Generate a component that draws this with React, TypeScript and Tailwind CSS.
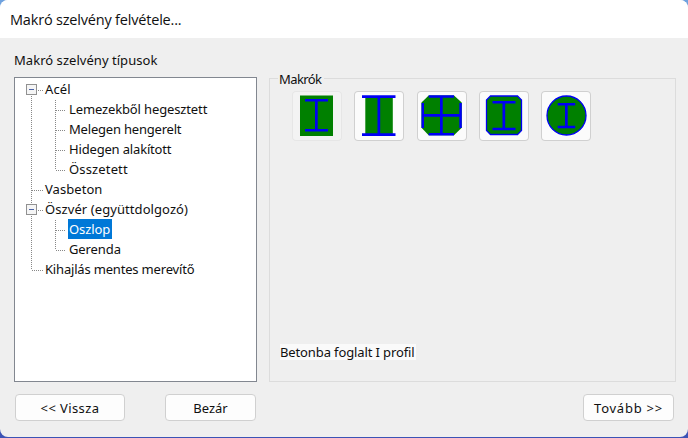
import type { ReactNode } from "react";

type Trunk = "top" | "mid" | "end";
type Item = { label: string; level: 0 | 1; trunk: Trunk; branch?: "mid" | "end"; box?: boolean; selected?: boolean; tracking: string };

const items: Item[] = [
  { label: "Acél", level: 0, trunk: "top", box: true, tracking: "tracking-[0.1px]" },
  { label: "Lemezekből hegesztett", level: 1, trunk: "mid", branch: "mid", tracking: "tracking-[-0.13px]" },
  { label: "Melegen hengerelt", level: 1, trunk: "mid", branch: "mid", tracking: "tracking-[-0.2px]" },
  { label: "Hidegen alakított", level: 1, trunk: "mid", branch: "mid", tracking: "tracking-[-0.17px]" },
  { label: "Összetett", level: 1, trunk: "mid", branch: "end", tracking: "tracking-[0.15px]" },
  { label: "Vasbeton", level: 0, trunk: "mid", tracking: "tracking-[0.05px]" },
  { label: "Öszvér (együttdolgozó)", level: 0, trunk: "mid", box: true, tracking: "tracking-[0.08px]" },
  { label: "Oszlop", level: 1, trunk: "mid", branch: "mid", selected: true, tracking: "tracking-[-0.1px]" },
  { label: "Gerenda", level: 1, trunk: "mid", branch: "end", tracking: "tracking-[-0.1px]" },
  { label: "Kihajlás mentes merevítő", level: 0, trunk: "end", tracking: "tracking-[-0.18px]" },
];

function TreeRow({ item }: { item: Item }) {
  const y1 = item.trunk === "top" ? 10 : 0;
  const y2 = item.trunk === "end" ? 10 : 20;
  return (
    <div className="flex h-5 items-start">
      <svg className="h-5 w-6 shrink-0" viewBox="0 0 24 20" shapeRendering="crispEdges" fill="none">
        <path d={`M11.5 ${y1}V${y2}`} stroke="#888" strokeDasharray="1 1" />
        {item.level === 0 && <path d="M12 10.5H23" stroke="#888" strokeDasharray="1 1" />}
        {item.box && (
          <>
            <rect x="6.5" y="4.5" width="10" height="10" fill="#f5f5f5" stroke="#919191" />
            <path d="M9 9.5H14" stroke="#4b63a7" />
          </>
        )}
      </svg>
      {item.level === 1 && (
        <svg className="h-5 w-6 shrink-0" viewBox="0 0 24 20" shapeRendering="crispEdges" fill="none">
          <path d={item.branch === "end" ? "M11.5 0V10" : "M11.5 0V20"} stroke="#888" strokeDasharray="1 1" />
          <path d="M12 10.5H22" stroke="#888" strokeDasharray="1 1" />
        </svg>
      )}
      <span className={`-mt-px flex h-5 items-center whitespace-nowrap pl-[1px] pr-[2px] ${item.tracking} ${item.selected ? "bg-[#0078d7] text-white" : ""}`}>
        {item.label}
      </span>
    </div>
  );
}

function MacroButton({ x, disabled, children }: { x: number; disabled?: boolean; children: ReactNode }) {
  return (
    <button className={`h-[50px] w-[50px] shrink-0 rounded-[4px] shadow-[inset_0_0_0_1px] ${disabled ? "bg-[#f3f3f3] shadow-[#e6e6e6]" : "bg-[#fbfbfb] shadow-[#d0d0d0]"}`}>
      <svg className="block h-[50px] w-[50px]" viewBox={`${x} 91 50 50`} fill="#0000f5">{children}</svg>
    </button>
  );
}

function PushButton({ className, children }: { className: string; children: ReactNode }) {
  return (
    <button className={`flex h-[27px] items-center justify-center whitespace-nowrap rounded-[4px] border border-[#d0d0d0] bg-[#fdfdfd] ${className}`}>
      {children}
    </button>
  );
}

export default function App() {
  return (
    <div className="h-[438px] w-[688px] overflow-hidden bg-[linear-gradient(#6fa2df_0,#6fa2df_50%,#3c53b5_50%)] pb-[1px] font-['Noto_Sans',sans-serif] text-[13px] leading-[20px] text-[#101010]">
      <div className="flex h-[437px] flex-col overflow-hidden rounded-[8px] bg-[#efefef]">
        <header className="flex h-[38px] shrink-0 items-center bg-white pl-[10px] pt-[1px] font-['Open_Sans',sans-serif] text-[14.5px] tracking-[-0.19px]">
          <span>Makró szelvény felvétele...</span>
        </header>
        <main className="flex h-[344px] shrink-0 pl-[14px]">
          <section className="w-[243px] shrink-0 pt-[12px]">
            <div className="h-[27px] tracking-[0.04px]">Makró szelvény típusok</div>
            <div className="h-[305px] border border-[#828790] bg-white pl-[5px] pt-[2px]">
              {items.map((item) => <TreeRow key={item.label} item={item} />)}
            </div>
          </section>
          <fieldset className="ml-[12px] mt-[40px] h-[304px] w-[407px] border border-[#dcdcdc]">
            <div className="-mt-[10px] ml-[8px] flex h-[20px] w-[46px] items-center bg-[#efefef] pl-[1px] tracking-[-0.6px]">Makrók</div>
            <div className="ml-[22px] mt-[2px] flex">
              <MacroButton x={292} disabled>
                <path fill="#008000" d="M300 95.5h33v40.5h-33z" />
                <path d="M305 99h23v2.5h-23zM305 129h23v2.5h-23zM315 99h2.7v32h-2.7z" />
              </MacroButton>
              <div className="ml-[12px]"><MacroButton x={354}>
                <path fill="#008000" d="M365.3 97h27.5v38h-27.5z" />
                <path d="M362 95.3h33.5v2.7h-33.5zM362 133.2h33.5v2.7h-33.5zM377.5 96h2.7v39h-2.7z" />
              </MacroButton></div>
              <div className="ml-[13px]"><MacroButton x={417}>
                <path fill="#008000" d="M428.7 95.5h25.3l7.7 7v25.3l-7.7 7.4h-25.3l-7.2-7.4v-25.3z" />
                <path d="M428.7 95.3h25.3v2.5h-25.3zM428.7 133h25.3v2.5h-25.3zM421.5 103h2.5v25h-2.5zM459.3 103h2.5v25h-2.5zM422 114h39v2.7h-39zM440 96h2.7v39h-2.7z" />
              </MacroButton></div>
              <div className="ml-[12px]"><MacroButton x={479}>
                <path fill="#008000" stroke="#0000f5" strokeWidth="1.3" d="M490.5 96h27l4 4v30.5l-4 4h-27l-4-4v-30.5z" />
                <path d="M492.5 101h23v2.5h-23zM492.5 127.7h23v2.5h-23zM502.5 101h2.7v29h-2.7z" />
              </MacroButton></div>
              <div className="ml-[12px]"><MacroButton x={541}>
                <circle cx="566.5" cy="115.5" r="19.5" fill="#008000" stroke="#0000f5" strokeWidth="1.3" />
                <path d="M557.7 103h17.5v2.5h-17.5zM557.7 125.7h17.5v2.5h-17.5zM565 103h2.7v25h-2.7z" />
              </MacroButton></div>
            </div>
            <div className="ml-[10px] mt-[202px] flex h-[16px] w-[136px] items-center whitespace-nowrap bg-[#fafafa] tracking-[-0.12px] -translate-y-[4px]">Betonba foglalt I profil</div>
          </fieldset>
        </main>
        <footer className="flex pl-[15px] pt-[12px]">
          <PushButton className="w-[110px] tracking-[0.4px]">&lt;&lt; Vissza</PushButton>
          <PushButton className="ml-[40px] w-[91px]">Bezár</PushButton>
          <PushButton className="ml-[327px] w-[91px] tracking-[0.75px]">Tovább &gt;&gt;</PushButton>
        </footer>
      </div>
    </div>
  );
}
